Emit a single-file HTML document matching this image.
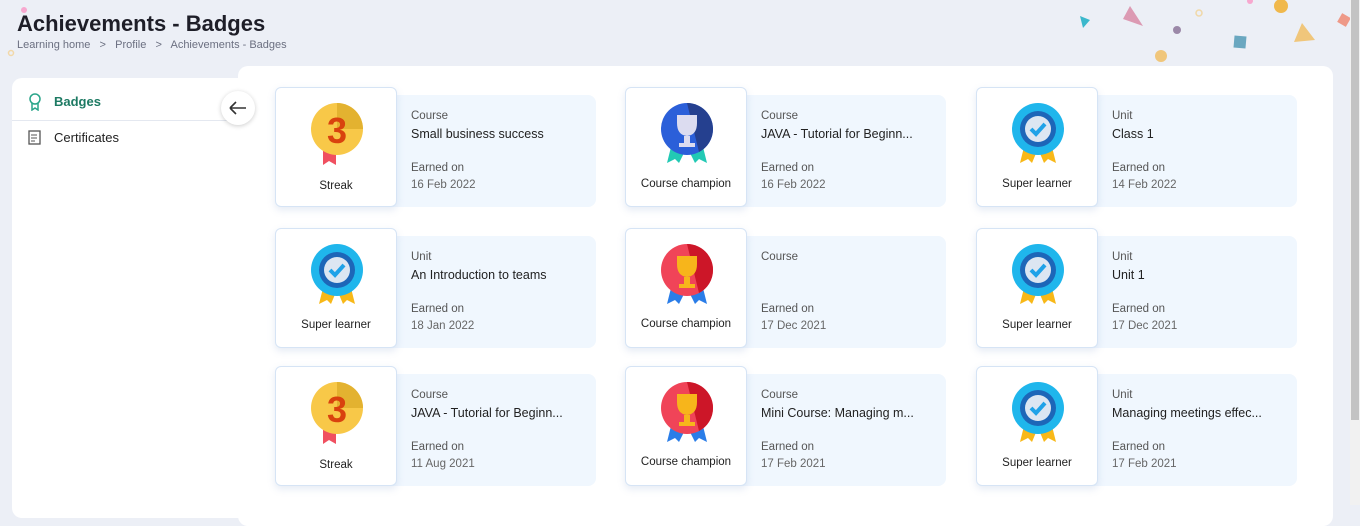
<!DOCTYPE html>
<html><head><meta charset="utf-8"><style>
*{margin:0;padding:0;box-sizing:border-box}
body{width:1360px;height:505px;overflow:hidden;background:#eceff6;font-family:"Liberation Sans",sans-serif;position:relative;color:#222}
.h1{position:absolute;left:17px;top:11px;font-size:22px;font-weight:bold;color:#1e1e28}
.bc{position:absolute;left:17px;top:39px;font-size:11px;color:#6b6f80}
.side{position:absolute;left:12px;top:78px;width:240px;height:440px;background:#fff;border-radius:10px}
.main{position:absolute;left:238px;top:66px;width:1095px;height:460px;background:#fff;border-radius:10px}
.nav{position:absolute;left:54px;font-size:13px}
.back{position:absolute;left:221px;top:91px;width:34px;height:34px;border-radius:50%;background:#fff;box-shadow:0 1px 5px rgba(0,0,0,.2)}
.card{position:absolute;width:322px;height:120px}
.bx{position:absolute;left:0;top:0;width:122px;height:120px;background:#fff;border:1px solid #d6e4f5;border-radius:6px;box-shadow:0 3px 8px rgba(120,150,200,.2);z-index:2;text-align:center}
.bx svg{position:absolute;left:33px;top:13px}
.bx .l{position:absolute;left:0;right:0;top:92px;font-size:11.5px;color:#222}
.inf{position:absolute;left:118px;top:8px;width:203px;height:112px;background:#f0f7fe;border-radius:0 8px 8px 0}
.inf div{position:absolute;left:18px;font-size:11.5px;white-space:nowrap}
.t{top:15px;color:#555}.n{top:32px;font-size:12.5px!important;color:#222}.e{top:67px;color:#555}.d{top:84px;color:#666}
.sb{position:absolute;left:1350px;top:0;width:10px;height:505px;background:#f1f1f1}
.sb i{position:absolute;left:1px;top:0;width:8px;height:420px;background:#c3c3c3}
</style></head><body>
<svg style="position:absolute;left:0;top:0" width="1360" height="80">
<circle cx="24" cy="10" r="3" fill="#f7a8cf"/><circle cx="11" cy="53" r="2.5" fill="none" stroke="#f2d8a8" stroke-width="1.5"/>
<polygon points="1080,16 1090,20 1083,28" fill="#3bb8cc"/>
<polygon points="1130,6 1143,26 1123,19" fill="#dc9ab3"/>
<circle cx="1177" cy="30" r="4" fill="#9b88a8"/><circle cx="1199" cy="13" r="3" fill="none" stroke="#f0d8a8" stroke-width="1.5"/>
<circle cx="1161" cy="56" r="6" fill="#f0c67b"/>
<rect x="1234" y="36" width="12" height="12" fill="#6aa7c0" transform="rotate(5 1240 42)"/>
<circle cx="1250" cy="1" r="3" fill="#f7a8cf"/><circle cx="1281" cy="6" r="7" fill="#f0b84c"/>
<polygon points="1302,23 1315,40 1294,42" fill="#f0c67b"/>
<rect x="1339" y="15" width="10" height="10" fill="#ee9988" transform="rotate(30 1344 20)"/>
</svg>
<div class="h1">Achievements - Badges</div>
<div class="bc">Learning home &nbsp;&nbsp;&gt;&nbsp;&nbsp; Profile &nbsp;&nbsp;&gt;&nbsp;&nbsp; Achievements - Badges</div>
<div class="side"><div style="position:absolute;left:0;top:42px;width:228px;height:1px;background:#e4e8f0"></div></div>
<svg style="position:absolute;left:28px;top:93px" width="14" height="18"><circle cx="7" cy="6" r="5" fill="none" stroke="#2aa58a" stroke-width="1.5"/><path d="M4 10 L4 17 L7 15 L10 17 L10 10" fill="none" stroke="#2aa58a" stroke-width="1.5"/></svg>
<div class="nav" style="top:94px;color:#1d7a63;font-weight:bold">Badges</div>
<svg style="position:absolute;left:28px;top:130px" width="14" height="15"><rect x="1" y="1" width="11" height="13" fill="none" stroke="#555" stroke-width="1.3"/><path d="M3 5h6M3 8h6M3 11h4" stroke="#555"/></svg>
<div class="nav" style="top:130px">Certificates</div>
<div class="main"></div>
<div class="back"><svg width="34" height="34"><path d="M9 17H25M9 17L15 11M9 17L15 23" stroke="#333" stroke-width="1.6" fill="none"/></svg></div>
<div class="sb"><i></i></div>

<svg width="0" height="0" style="position:absolute">
<defs>
<g id="streak"><path d="M14 50 L14 64 L20 60 L27 64 L27 50Z" fill="#f05060"/><circle cx="28" cy="28" r="26" fill="#f8c848"/><path d="M28 2 A26 26 0 0 1 54 28 L28 28Z" fill="#e3b230"/><text x="28" y="42" text-anchor="middle" font-size="36" font-weight="bold" fill="#d9420e" font-family="Liberation Sans">3</text></g>
<g id="champB"><path d="M12 46 L8 62 L16 58 L20 62 L26 50Z M44 46 L48 62 L40 58 L36 62 L30 50Z" fill="#22c9b4"/><circle cx="28" cy="28" r="26" fill="#2b5fd9"/><path d="M28 2 A26 26 0 0 1 54 28 A26 26 0 0 1 40 51Z" fill="#25408f"/><path d="M18 14 H38 V22 Q38 34 28 35 Q18 34 18 22Z M25 35 H31 V42 H25Z M20 42 H36 V46 H20Z" fill="#dcdcf0"/></g>
<g id="champR"><path d="M12 46 L8 62 L16 58 L20 62 L26 50Z M44 46 L48 62 L40 58 L36 62 L30 50Z" fill="#2a7de8"/><circle cx="28" cy="28" r="26" fill="#f04458"/><path d="M28 2 A26 26 0 0 1 54 28 A26 26 0 0 1 40 51Z" fill="#cc1628"/><path d="M18 14 H38 V22 Q38 34 28 35 Q18 34 18 22Z M25 35 H31 V42 H25Z M20 42 H36 V46 H20Z" fill="#f7b51b"/></g>
<g id="super"><path d="M14 46 L10 62 L18 58 L22 62 L27 50Z M42 46 L46 62 L38 58 L34 62 L29 50Z" fill="#f8b818"/><circle cx="28" cy="28" r="26" fill="#1fb6ec"/><circle cx="28" cy="28" r="18" fill="#1d66b8"/><circle cx="28" cy="28" r="13" fill="#dce6f2"/><path d="M21 28 L26 33 L35 23" stroke="#1fa2e8" stroke-width="4" fill="none"/></g>
</defs></svg>

<div class="card" style="left:275px;top:87px"><div class="bx"><svg width="56" height="66"><use href="#streak"/></svg><div class="l" style="top:92px">Streak</div></div><div class="inf"><div class="t">Course</div><div class="n">Small business success</div><div class="e">Earned on</div><div class="d">16 Feb 2022</div></div></div>
<div class="card" style="left:625px;top:87px"><div class="bx"><svg width="56" height="66"><use href="#champB"/></svg><div class="l" style="top:90px">Course champion</div></div><div class="inf"><div class="t">Course</div><div class="n">JAVA - Tutorial for Beginn...</div><div class="e">Earned on</div><div class="d">16 Feb 2022</div></div></div>
<div class="card" style="left:976px;top:87px"><div class="bx"><svg width="56" height="66"><use href="#super"/></svg><div class="l" style="top:90px">Super learner</div></div><div class="inf"><div class="t">Unit</div><div class="n">Class 1</div><div class="e">Earned on</div><div class="d">14 Feb 2022</div></div></div>
<div class="card" style="left:275px;top:228px"><div class="bx"><svg width="56" height="66"><use href="#super"/></svg><div class="l" style="top:90px">Super learner</div></div><div class="inf"><div class="t">Unit</div><div class="n">An Introduction to teams</div><div class="e">Earned on</div><div class="d">18 Jan 2022</div></div></div>
<div class="card" style="left:625px;top:228px"><div class="bx"><svg width="56" height="66"><use href="#champR"/></svg><div class="l" style="top:89px">Course champion</div></div><div class="inf"><div class="t">Course</div><div class="e">Earned on</div><div class="d">17 Dec 2021</div></div></div>
<div class="card" style="left:976px;top:228px"><div class="bx"><svg width="56" height="66"><use href="#super"/></svg><div class="l" style="top:90px">Super learner</div></div><div class="inf"><div class="t">Unit</div><div class="n">Unit 1</div><div class="e">Earned on</div><div class="d">17 Dec 2021</div></div></div>
<div class="card" style="left:275px;top:366px"><div class="bx"><svg width="56" height="66"><use href="#streak"/></svg><div class="l" style="top:92px">Streak</div></div><div class="inf"><div class="t">Course</div><div class="n">JAVA - Tutorial for Beginn...</div><div class="e">Earned on</div><div class="d">11 Aug 2021</div></div></div>
<div class="card" style="left:625px;top:366px"><div class="bx"><svg width="56" height="66"><use href="#champR"/></svg><div class="l" style="top:89px">Course champion</div></div><div class="inf"><div class="t">Course</div><div class="n">Mini Course: Managing m...</div><div class="e">Earned on</div><div class="d">17 Feb 2021</div></div></div>
<div class="card" style="left:976px;top:366px"><div class="bx"><svg width="56" height="66"><use href="#super"/></svg><div class="l" style="top:90px">Super learner</div></div><div class="inf"><div class="t">Unit</div><div class="n">Managing meetings effec...</div><div class="e">Earned on</div><div class="d">17 Feb 2021</div></div></div>
</body></html>
